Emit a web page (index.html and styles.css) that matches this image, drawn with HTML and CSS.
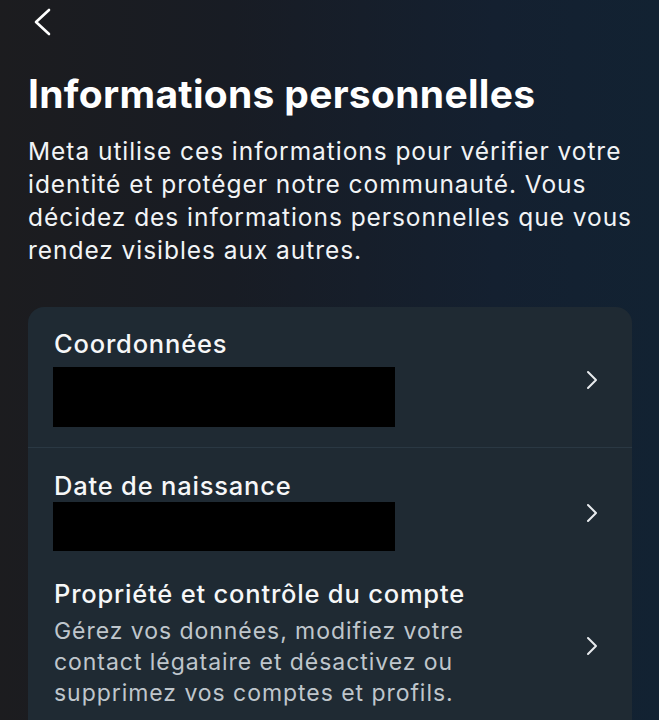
FILE: index.html
```html
<!DOCTYPE html>
<html lang="fr">
<head>
	<meta charset="UTF-8">
	<title>Informations personnelles</title>
	<link rel="stylesheet" href="styles.css">
</head>
<body>
<div class="page">
	<div class="topbar">
		<svg class="back" width="20" height="28" viewBox="0 0 20 28">
			<path d="M17 2 L4 14 L17 26" fill="none" stroke="#fff" stroke-width="2.6" stroke-linecap="round" stroke-linejoin="round"/>
		</svg>
	</div>
	<h1 class="title">Informations personnelles</h1>
	<p class="intro">Meta utilise ces informations pour vérifier votre identité et protéger notre communauté. Vous décidez des informations personnelles que vous rendez visibles aux autres.</p>

	<div class="card">
		<div class="row row-first">
			<div class="row-body">
				<div class="row-title">Coordonnées</div>
				<div class="masked masked-tall"></div>
			</div>
			<svg class="chevron" width="14" height="20" viewBox="0 0 14 20">
				<path d="M3 2 L11 10 L3 18" fill="none" stroke="#e8ebee" stroke-width="2" stroke-linecap="round" stroke-linejoin="round"/>
			</svg>
		</div>
		<div class="row row-second">
			<div class="row-body">
				<div class="row-title">Date de naissance</div>
				<div class="masked"></div>
			</div>
			<svg class="chevron" width="14" height="20" viewBox="0 0 14 20">
				<path d="M3 2 L11 10 L3 18" fill="none" stroke="#e8ebee" stroke-width="2" stroke-linecap="round" stroke-linejoin="round"/>
			</svg>
		</div>
		<div class="row row-third">
			<div class="row-body">
				<div class="row-title">Propriété et contrôle du compte</div>
				<div class="row-desc">Gérez vos données, modifiez votre contact légataire et désactivez ou supprimez vos comptes et profils.</div>
			</div>
			<svg class="chevron" width="14" height="20" viewBox="0 0 14 20">
				<path d="M3 2 L11 10 L3 18" fill="none" stroke="#e8ebee" stroke-width="2" stroke-linecap="round" stroke-linejoin="round"/>
			</svg>
		</div>
	</div>
</div>
</body>
</html>
```

FILE: styles.css
```css
html, body {
	margin: 0;
	height: 100%;
}

body {
	background: linear-gradient(90deg, #1c1c1f 0%, #181c24 35%, #142030 75%, #122232 100%);
	color: #fff;
	font-family: Inter, Roboto, sans-serif;
	overflow: hidden;
}

.page {
	padding: 0 27px 0 28px;
}

/* header */
.topbar {
	height: 44px;
	padding-left: 4px;
}

.back {
	display: block;
	margin-top: 8px;
}

.title {
	margin: 19px 0 0;
	font-size: 39px;
	font-weight: 700;
	line-height: 46px;
	letter-spacing: 0.3px;
}

.intro {
	margin: 18px 0 0;
	font-size: 24.5px;
	line-height: 33px;
	letter-spacing: 0.95px;
	color: #f2f4f6;
}

/* settings card */
.card {
	margin-top: 40px;
	background: #1f2a33;
	border-radius: 16px;
	height: 460px;
}

.row {
	display: flex;
	align-items: center;
	padding: 0 33px 0 26px;
}

.row-body {
	flex: 1;
}

.row-title {
	font-size: 25.5px;
	font-weight: 500;
	line-height: 32px;
	letter-spacing: 0.8px;
	color: #f6f7f8;
}

.row-first {
	padding-top: 21px;
	padding-bottom: 20px;
	border-bottom: 1px solid #2a3843;
}

.row-second {
	padding-top: 22px;
}

.row-third {
	padding-top: 27px;
}

.masked {
	background: #000;
	width: 342px;
	height: 49px;
	margin-left: -1px;
}

.masked-tall {
	margin-top: 7px;
	height: 60px;
}

.row-desc {
	max-width: 430px;
	font-size: 23px;
	line-height: 31px;
	letter-spacing: 0.95px;
	color: #bfc6cc;
	margin-top: 6px;
}

.chevron {
	flex: none;
	margin-top: 4px;
}
```
